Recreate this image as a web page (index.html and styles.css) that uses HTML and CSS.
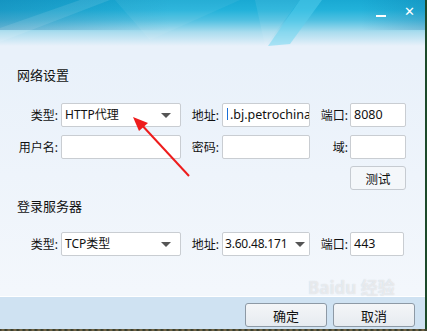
FILE: index.html
```html
<!DOCTYPE html>
<html lang="zh-CN">
<head>
    <meta charset="UTF-8">
    <title>设置</title>
    <link rel="stylesheet" href="styles.css">
</head>
<body>
    <div class="window">
        <div class="titlebar">
            <svg class="shine" width="425" height="50" viewBox="0 0 425 50">
                <polygon points="0,28 80,0 110,0 0,42" fill="#ffffff" opacity="0.10"/>
                <polygon points="115,0 240,0 150,40" fill="#ffffff" opacity="0.06"/>
                <polygon points="255,0 300,0 265,46" fill="#ffffff" opacity="0.08"/>
                <polygon points="300,0 322,0 290,44 268,46" fill="#5fd3ef" opacity="0.45"/>
            </svg>
            <span class="btn-min"></span>
            <span class="btn-close">✕</span>
        </div>

        <div class="content">
            <h2 class="section">网络设置</h2>
            <div class="row">
                <label class="lab">类型:</label>
                <div class="field wide select">HTTP代理<span class="caret"></span></div>
                <label class="lab mid">地址:</label>
                <div class="field addr"><span class="cursor"></span>.bj.petrochina</div>
                <label class="lab mid">端口:</label>
                <div class="field port">8080</div>
            </div>
            <div class="row">
                <label class="lab">用户名:</label>
                <div class="field wide"></div>
                <label class="lab mid">密码:</label>
                <div class="field addr"></div>
                <label class="lab mid">域:</label>
                <div class="field port"></div>
            </div>
            <div class="row test-row">
                <button class="btn test">测试</button>
            </div>

            <h2 class="section second">登录服务器</h2>
            <div class="row">
                <label class="lab">类型:</label>
                <div class="field wide select">TCP类型<span class="caret"></span></div>
                <label class="lab mid">地址:</label>
                <div class="field addr select">3.60.48.171<span class="caret boxed"></span></div>
                <label class="lab mid">端口:</label>
                <div class="field port small">443</div>
            </div>
        </div>

        <div class="footer">
            <button class="btn action">确定</button>
            <button class="btn action">取消</button>
        </div>

        <div class="watermark">Baidu 经验</div>

        <svg class="arrow" width="427" height="331" viewBox="0 0 427 331">
            <line x1="189" y1="176" x2="139" y2="122" stroke="#ee1c1c" stroke-width="2"/>
            <polygon points="133,117 148,123 139,131" fill="#ee1c1c"/>
        </svg>
    </div>
    <div class="taskbar"></div>
</body>
</html>
```

FILE: styles.css
```css
* {
    box-sizing: border-box;
    font-family: "Noto Sans", "Noto Sans CJK SC", sans-serif;
}
body {
    margin: 0;
    width: 427px;
    height: 331px;
    overflow: hidden;
    background: #1c4a2a;
}
.window {
    position: relative;
    width: 425px;
    height: 329px;
    display: flex;
    flex-direction: column;
    background: linear-gradient(to bottom, #e9f1fa 60px, #f3f7fc 290px);
}
.titlebar {
    position: relative;
    height: 50px;
    flex: none;
    background: linear-gradient(to bottom, #19a9d3 0, #22b2da 10px, #4fc0e1 20px, #a9dcee 32px, #e9f1fa 46px);
}
.titlebar::before {
    content: "";
    position: absolute;
    left: 0;
    top: 0;
    width: 100%;
    height: 30px;
    background: linear-gradient(to right, rgba(12, 110, 160, 0.35), rgba(12, 110, 160, 0) 40%, rgba(12, 110, 160, 0) 85%, rgba(12, 110, 160, 0.25));
}
.shine {
    position: absolute;
    left: 0;
    top: 0;
}
.btn-min {
    position: absolute;
    left: 376px;
    top: 15px;
    width: 10px;
    height: 2px;
    background: #fff;
}
.btn-close {
    position: absolute;
    left: 404px;
    top: 4px;
    color: #fff;
    font-size: 13px;
    font-weight: bold;
    font-family: "DejaVu Sans", sans-serif;
}
.content {
    flex: 1;
    padding-top: 16px;
}
.section {
    margin: 0 0 19px 17px;
    font-size: 13px;
    font-weight: normal;
    line-height: 18px;
    color: #111;
}
.section.second {
    margin-top: 7px;
    margin-bottom: 17px;
}
.row {
    display: flex;
    align-items: center;
    padding-left: 14px;
    height: 24px;
    margin-bottom: 8px;
}
.lab {
    width: 44px;
    text-align: right;
    font-size: 12px;
    color: #111;
    margin-right: 3px;
}
.lab.mid {
    width: 38px;
}
.field {
    position: relative;
    height: 24px;
    background: #fff;
    border: 1px solid #c9cdd2;
    border-radius: 2px;
    font-size: 12px;
    line-height: 22px;
    padding-left: 3px;
    color: #111;
    white-space: nowrap;
    overflow: hidden;
}
.wide {
    width: 120px;
}
.addr {
    width: 88px;
    padding-left: 1px;
    font-size: 12.5px;
}
.port {
    width: 56px;
    margin-left: -1px;
    font-size: 12.5px;
}
.port.small {
    width: 54px;
}
.cursor {
    display: inline-block;
    width: 1px;
    height: 12px;
    margin: 0 2px 0 3px;
    background: #1a6fd8;
    vertical-align: -1px;
}
.caret {
    position: absolute;
    right: 9px;
    top: 9px;
    width: 0;
    height: 0;
    border-left: 5px solid transparent;
    border-right: 5px solid transparent;
    border-top: 5px solid #555;
}
.addr.select {
    padding-left: 2px;
    font-size: 12px;
    letter-spacing: -0.2px;
}
.caret.boxed {
    right: 0;
    top: 0;
    width: 18px;
    height: 22px;
    border: none;
    background: #fff;
}
.caret.boxed::after {
    content: "";
    position: absolute;
    left: 4px;
    top: 9px;
    border-left: 5px solid transparent;
    border-right: 5px solid transparent;
    border-top: 5px solid #555;
}
.test-row {
    padding-left: 350px;
    margin-bottom: 0;
    margin-top: -1px;
}
.btn {
    font-size: 12.5px;
    color: #111;
    cursor: pointer;
    border-radius: 3px;
}
.test {
    width: 56px;
    height: 24px;
    border: 1px solid #c6cbd1;
    background: #f4f7fa;
}
.footer {
    height: 33px;
    flex: none;
    display: flex;
    justify-content: flex-end;
    align-items: flex-start;
    gap: 6px;
    padding: 6px 10px 0 0;
    background: #cfe2f2;
    border-top: 1px solid #fff;
}
.action {
    width: 82px;
    height: 24px;
    border: 1px solid #8d99a5;
    background: linear-gradient(to bottom, #f4f6f8, #e6ebf0);
    font-size: 13px;
}
.watermark {
    position: absolute;
    left: 308px;
    top: 280px;
    font-size: 17px;
    line-height: 16px;
    font-weight: bold;
    color: rgba(255, 255, 255, 0.55);
    text-shadow: 0 0 1px rgba(150, 160, 170, 0.45);
    pointer-events: none;
}
.arrow {
    position: absolute;
    left: 0;
    top: 0;
    pointer-events: none;
}
.taskbar {
    height: 2px;
    background: repeating-linear-gradient(to right, #3a3a2a 0, #7a6a4a 3px, #2a3a2a 6px);
}
```
